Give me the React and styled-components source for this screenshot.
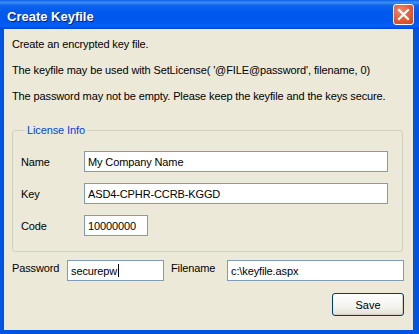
import styled, { createGlobalStyle } from "styled-components";

const GlobalStyle = createGlobalStyle`
  html, body {
    margin: 0;
    padding: 0;
    background: #ffffff;
  }
  * {
    box-sizing: border-box;
  }
`;

export default function App() {
  return (
    <>
      <GlobalStyle />
      <Window>
        <TitleBar>
          <Title>Create Keyfile</Title>
          <CloseButton aria-label="Close">
            <svg width="13" height="13" viewBox="0 0 13 13">
              <path
                d="M2 2 L11 11 M11 2 L2 11"
                stroke="#ffffff"
                strokeWidth="2.2"
                strokeLinecap="square"
              />
            </svg>
          </CloseButton>
        </TitleBar>
        <Body>
          <Intro>
            <p>Create an encrypted key file.</p>
            <p>The keyfile may be used with SetLicense( '@FILE@password', filename, 0)</p>
            <p>The password may not be empty. Please keep the keyfile and the keys secure.</p>
          </Intro>
          <Group>
            <Legend>License Info</Legend>
            <FieldGrid>
              <Label>Name</Label>
              <Field>My Company Name</Field>
              <Label>Key</Label>
              <Field>ASD4-CPHR-CCRB-KGGD</Field>
              <Label>Code</Label>
              <Field $width={64}>10000000</Field>
            </FieldGrid>
          </Group>
          <BottomRow>
            <Label $width={55}>Password</Label>
            <Field $width={97}>
              securepw
              <Caret />
            </Field>
            <Label $width={56} $gap={7}>
              Filename
            </Label>
            <Field $width={177}>c:\keyfile.aspx</Field>
          </BottomRow>
          <Actions>
            <Button>Save</Button>
          </Actions>
        </Body>
      </Window>
    </>
  );
}

const Window = styled.div`
  width: 419px;
  height: 334px;
  display: flex;
  flex-direction: column;
  background: #0054e3;
  font-family: "Liberation Sans", Arial, sans-serif;
  font-size: 11px;
  letter-spacing: -0.12px;
  color: #000000;
`;

const TitleBar = styled.div`
  height: 29px;
  flex: none;
  display: flex;
  align-items: center;
  justify-content: space-between;
  padding: 3px 5px 0 7px;
  background: linear-gradient(
    to bottom,
    #0a5fe8 0%,
    #3d8df5 8%,
    #0b63ec 20%,
    #0058ee 45%,
    #0058ee 75%,
    #0060f8 90%,
    #0043d0 100%
  );
`;

const Title = styled.span`
  color: #ffffff;
  font-family: "Liberation Sans", Arial, sans-serif;
  font-weight: bold;
  font-size: 13px;
  text-shadow: 1px 1px 0 #0a1e6c;
  letter-spacing: 0;
`;

const CloseButton = styled.div`
  width: 21px;
  height: 21px;
  margin-bottom: 3px;
  display: flex;
  align-items: center;
  justify-content: center;
  border: 1px solid #ffffff;
  border-radius: 3px;
  background: radial-gradient(circle at 35% 30%, #f0896a 0%, #e15a32 55%, #c8431b 100%);
`;

const Body = styled.div`
  flex: 1;
  display: flex;
  flex-direction: column;
  margin: 0 6px 4px 4px;
  padding: 9px 9px 0 8px;
  background: #ece9d8;
`;

const Intro = styled.div`
  display: flex;
  flex-direction: column;
  gap: 13px;

  p {
    margin: 0;
    line-height: 13px;
    white-space: nowrap;
  }
`;

const Group = styled.fieldset`
  margin: 21px 1px 0 0;
  padding: 14px 14px 15px 8px;
  border: 1px solid #d0d0bf;
  border-radius: 3px;
  min-width: 0;
`;

const Legend = styled.legend`
  margin-left: 4px;
  padding: 0 2px;
  color: #0046d5;
  line-height: 13px;
`;

const FieldGrid = styled.div`
  display: grid;
  grid-template-columns: 63px 1fr;
  grid-auto-rows: 21px;
  row-gap: 11px;
  align-items: center;
`;

const Label = styled.span`
  width: ${(p) => (p.$width ? `${p.$width}px` : "auto")};
  margin-left: ${(p) => (p.$gap ? `${p.$gap}px` : "0")};
  flex: none;
  white-space: nowrap;
`;

const Field = styled.div`
  position: relative;
  height: 21px;
  width: ${(p) => (p.$width ? `${p.$width}px` : "100%")};
  flex: none;
  display: flex;
  align-items: center;
  padding: 0 3px;
  background: #ffffff;
  border: 1px solid #7f9db9;
  white-space: nowrap;
  overflow: hidden;
`;

const Caret = styled.span`
  display: inline-block;
  width: 1px;
  height: 13px;
  margin-left: 1px;
  background: #000000;
`;

const BottomRow = styled.div`
  display: flex;
  align-items: center;
  margin-top: 8px;
  height: 21px;

  ${Label} {
    margin-top: -6px;
  }
`;

const Actions = styled.div`
  display: flex;
  justify-content: flex-end;
  margin-top: 12px;
`;

const Button = styled.button`
  width: 72px;
  height: 23px;
  padding: 0;
  font-family: "Liberation Sans", Arial, sans-serif;
  font-size: 11px;
  color: #000000;
  border: 1px solid #003c74;
  border-radius: 3px;
  background: linear-gradient(to bottom, #ffffff 0%, #f4f3ee 60%, #e3e1d6 100%);
  box-shadow: inset -1px -1px 0 #d6d0c5;
`;
